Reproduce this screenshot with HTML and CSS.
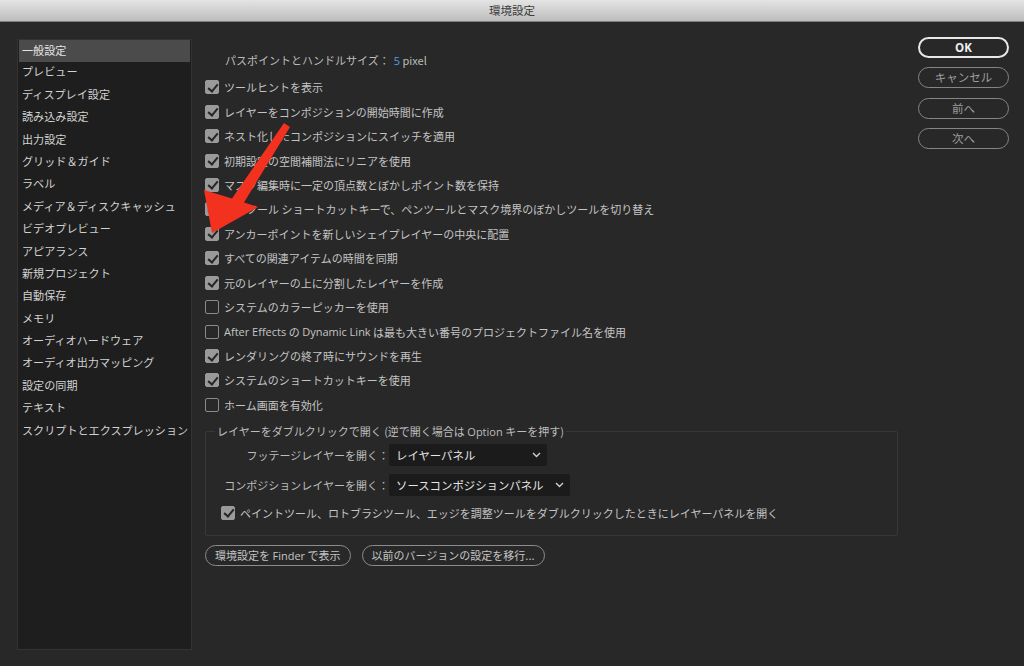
FILE: index.html
```html
<!DOCTYPE html>
<html lang="ja">
<head>
<meta charset="utf-8">
<link rel="stylesheet" href="styles.css">
</head>
<body>
<div class="titlebar">環境設定</div>
<div class="window">
  <ul class="sidebar">
    <li class="selected">一般設定</li>
    <li>プレビュー</li>
    <li>ディスプレイ設定</li>
    <li>読み込み設定</li>
    <li>出力設定</li>
    <li>グリッド＆ガイド</li>
    <li>ラベル</li>
    <li>メディア＆ディスクキャッシュ</li>
    <li>ビデオプレビュー</li>
    <li>アピアランス</li>
    <li>新規プロジェクト</li>
    <li>自動保存</li>
    <li>メモリ</li>
    <li>オーディオハードウェア</li>
    <li>オーディオ出力マッピング</li>
    <li>設定の同期</li>
    <li>テキスト</li>
    <li>スクリプトとエクスプレッション</li>
  </ul>
  <div class="main">
    <div class="pathsize">パスポイントとハンドルサイズ：<span class="num">5</span> pixel</div>
    <div class="checks">
      <div class="row"><span class="cb on"></span>ツールヒントを表示</div>
      <div class="row"><span class="cb on"></span>レイヤーをコンポジションの開始時間に作成</div>
      <div class="row"><span class="cb on"></span>ネスト化したコンポジションにスイッチを適用</div>
      <div class="row"><span class="cb on"></span>初期設定の空間補間法にリニアを使用</div>
      <div class="row"><span class="cb on"></span>マスク編集時に一定の頂点数とぼかしポイント数を保持</div>
      <div class="row"><span class="cb on"></span>ペンツール ショートカットキーで、ペンツールとマスク境界のぼかしツールを切り替え</div>
      <div class="row"><span class="cb on"></span>アンカーポイントを新しいシェイプレイヤーの中央に配置</div>
      <div class="row"><span class="cb on"></span>すべての関連アイテムの時間を同期</div>
      <div class="row"><span class="cb on"></span>元のレイヤーの上に分割したレイヤーを作成</div>
      <div class="row"><span class="cb"></span>システムのカラーピッカーを使用</div>
      <div class="row"><span class="cb"></span><span class="latin">After Effects</span>&nbsp;の&nbsp;<span class="latin">Dynamic Link</span>&nbsp;は最も大きい番号のプロジェクトファイル名を使用</div>
      <div class="row"><span class="cb on"></span>レンダリングの終了時にサウンドを再生</div>
      <div class="row"><span class="cb on"></span>システムのショートカットキーを使用</div>
      <div class="row"><span class="cb"></span>ホーム画面を有効化</div>
    </div>
    <fieldset class="group">
      <legend>レイヤーをダブルクリックで開く (逆で開く場合は <span class="latin">Option</span> キーを押す)</legend>
      <div class="selrow">
        <span class="sellabel footage">フッテージレイヤーを開く：</span>
        <span class="select w1">レイヤーパネル<svg class="chev" width="9" height="6" viewBox="0 0 9 6"><path d="M1 1l3.5 3.5L8 1" fill="none" stroke="#cfcfcf" stroke-width="1.4"/></svg></span>
      </div>
      <div class="selrow">
        <span class="sellabel">コンポジションレイヤーを開く：</span>
        <span class="select w2">ソースコンポジションパネル<svg class="chev" width="9" height="6" viewBox="0 0 9 6"><path d="M1 1l3.5 3.5L8 1" fill="none" stroke="#cfcfcf" stroke-width="1.4"/></svg></span>
      </div>
      <div class="row inner"><span class="cb on"></span>ペイントツール、ロトブラシツール、エッジを調整ツールをダブルクリックしたときにレイヤーパネルを開く</div>
    </fieldset>
    <div class="bottom">
      <button class="pill">環境設定を <span class="latin">Finder</span> で表示</button>
      <button class="pill">以前のバージョンの設定を移行...</button>
    </div>
  </div>
  <div class="buttons">
    <button class="btn ok">OK</button>
    <button class="btn">キャンセル</button>
    <button class="btn">前へ</button>
    <button class="btn">次へ</button>
  </div>
</div>
<svg class="arrow" width="1024" height="666" viewBox="0 0 1024 666">
  <polygon points="284,123 290,127 244,202.5 258,207 212,233 204,190 232,198.5" fill="#f2311f"/>
</svg>
</body>
</html>
```
FILE: styles.css
```css
* { box-sizing: border-box; }
html, body { margin: 0; padding: 0; }
body {
  width: 1024px;
  height: 666px;
  overflow: hidden;
  background: #282828;
  font-family: "Noto Sans CJK JP", "Noto Sans", sans-serif;
  font-size: 11px;
  color: #c9c9c9;
  position: relative;
}
.latin { font-family: "Open Sans", "Noto Sans", sans-serif; font-size: 11px; }
.titlebar {
  height: 22px;
  line-height: 21px;
  text-align: center;
  font-size: 11.5px;
  color: #3a3a3a;
  background: linear-gradient(#e4e4e4, #bdbdbd);
  border-bottom: 1px solid #7e7e7e;
}
.window {
  display: flex;
  align-items: flex-start;
  padding: 16px 0 0 17px;
  height: 644px;
}
.sidebar {
  list-style: none;
  margin: 1px 0 0 0;
  padding: 0 1px 0 1px;
  width: 175px;
  height: 611px;
  background: #1e1e1e;
  border: 1px solid #333;
  flex: none;
}
.sidebar li {
  height: 22.4px;
  line-height: 19px;
  padding-left: 3px;
  color: #d2d2d2;
  white-space: nowrap;
  font-size: 11.1px;
}
.sidebar li.selected { background: #4b4b4b; color: #e4e4e4; line-height: 20px; }
.main {
  width: 693px;
  margin-left: 13px;
  flex: none;
}
.pathsize {
  height: 20px;
  line-height: 20px;
  margin-top: 12px;
  padding-left: 20px;
  color: #bdbdbd;
}
.pathsize .num { color: #4b9ee6; font-family: "Open Sans", sans-serif; margin-left: 4px; }
.checks { margin-top: 5px; }
.row {
  display: flex;
  align-items: center;
  height: 24.45px;
  white-space: nowrap;
  color: #c4c4c4;
}
.cb {
  width: 14px;
  height: 14px;
  border: 1.5px solid #8a8a8a;
  border-radius: 2px;
  margin-right: 5px;
  flex: none;
  position: relative;
}
.cb.on {
  background: #9a9a9a;
  border-color: #9a9a9a;
}
.cb.on::after {
  content: "";
  position: absolute;
  left: 3.5px;
  top: 0.5px;
  width: 4px;
  height: 8px;
  border-right: 2px solid #262626;
  border-bottom: 2px solid #262626;
  transform: rotate(40deg);
}
.group {
  margin: 7px 0 0 0;
  width: 693px;
  height: 112px;
  border: 1px solid #383838;
  border-radius: 2px;
  padding: 0 0 0 15px;
}
.group legend {
  padding: 0 2px;
  margin-left: -6px;
  color: #bdbdbd;
  line-height: 14px;
}
.selrow {
  display: flex;
  align-items: center;
  height: 30px;
}
.selrow:first-of-type { margin-top: 1px; }
.sellabel { color: #bdbdbd; white-space: nowrap; width: 168px; text-align: right; }
.select {
  display: flex;
  align-items: center;
  justify-content: space-between;
  height: 22px;
  background: #1b1b1b;
  color: #e6e6e6;
  padding: 0 6px 0 7px;
  border-radius: 2px;
  font-size: 11.4px;
}
.select.w1 { width: 158px; }
.select.w2 { width: 181px; }
.row.inner { height: 25px; margin-top: 0; color: #c4c4c4; }
.bottom {
  display: flex;
  gap: 11px;
  margin-top: 9px;
}
.pill {
  height: 21px;
  padding: 0 9px;
  border: 1.5px solid #8c8c8c;
  border-radius: 11px;
  background: transparent;
  color: #c4c4c4;
  font-family: "Noto Sans CJK JP", sans-serif;
  font-size: 11px;
  line-height: 17px;
}
.buttons {
  display: flex;
  flex-direction: column;
  gap: 9.4px;
  margin-left: 20px;
  margin-top: -1px;
  width: 91px;
}
.btn {
  height: 21px;
  border: 1.5px solid #858585;
  border-radius: 11px;
  background: transparent;
  color: #9e9e9e;
  font-family: "Noto Sans CJK JP", sans-serif;
  font-size: 11.5px;
  line-height: 17px;
  padding: 0;
}
.btn.ok {
  border: 2px solid #e8e8e8;
  color: #f0f0f0;
  font-weight: bold;
  font-family: "Open Sans", sans-serif;
}
.arrow {
  position: absolute;
  left: 0;
  top: 0;
  pointer-events: none;
}
```
